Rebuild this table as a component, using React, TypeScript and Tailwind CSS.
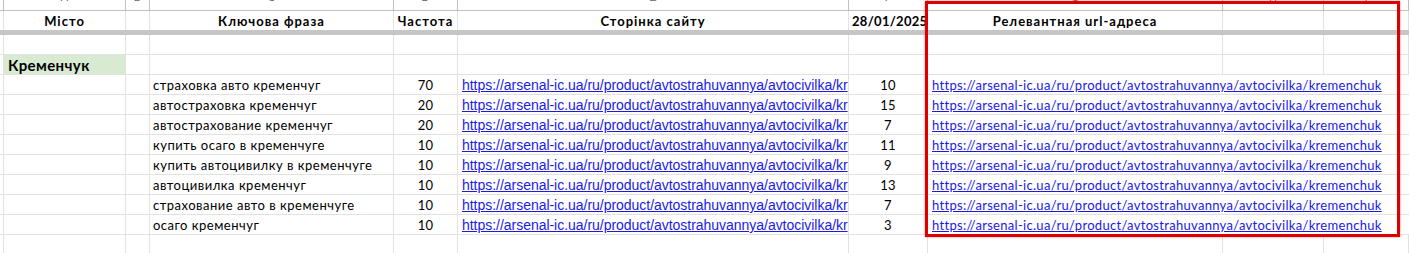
import React from "react";

const W = [4, 122, 24, 244, 64, 391, 79, 295, 101, 85];
const letters = ["", "A", "B", "C", "D", "E", "F", "G", "H", "I"];

const rows = [
  ["страховка авто кременчуг", "70", "10"],
  ["автостраховка кременчуг", "20", "15"],
  ["автострахование кременчуг", "20", "7"],
  ["купить осаго в кременчуге", "10", "11"],
  ["купить автоцивилку в кременчуге", "10", "9"],
  ["автоцивилка кременчуг", "10", "13"],
  ["страхование авто в кременчуге", "10", "7"],
  ["осаго кременчуг", "10", "3"],
];

const URL = "https://arsenal-ic.ua/ru/product/avtostrahuvannya/avtocivilka/kremenchuk";
const URL_CUT = "https://arsenal-ic.ua/ru/product/avtostrahuvannya/avtocivilka/kr";
const nun = "font-['Lato','Noto_Sans',sans-serif]";
const ari = "font-['Liberation_Sans',Arial,sans-serif]";

function Cell({ w, children, className = "" }: { w: number; children?: React.ReactNode; className?: string }) {
  return (
    <div
      className={`shrink-0 h-full border-r border-[#e2e2e2] overflow-hidden flex ${className}`}
      style={{ width: w }}
    >
      {children}
    </div>
  );
}

function EmptyRow() {
  return (
    <div className="flex h-[20px] border-b border-[#e2e2e2]">
      <Cell w={W[0]} className="border-[#c0c0c0]" />
      {W.slice(1).map((w, i) => (
        <Cell key={i} w={w} />
      ))}
    </div>
  );
}

export default function App() {
  return (
    <div className={`relative w-[1409px] h-[253px] bg-white overflow-hidden text-[#000] ${nun}`}>
      {/* column letters row */}
      <div className="flex h-[11px] border-b border-[#c0c0c0]">
        {W.map((w, i) => (
          <div
            key={i}
            className="shrink-0 h-full border-r border-[#c0c0c0] overflow-hidden flex justify-center"
            style={{ width: w }}
          >
            <span className={`text-[11px] leading-[11px] mt-[-8px] text-[#666] ${ari}`}>{letters[i]}</span>
          </div>
        ))}
      </div>
      {/* header row */}
      <div className="flex h-[19px] text-[13px] leading-[17px] font-bold tracking-[1px]">
        <Cell w={W[0]} className="border-[#c0c0c0]" />
        <Cell w={W[1]} className="items-end justify-center">Місто</Cell>
        <Cell w={W[2]} />
        <Cell w={W[3]} className="items-end justify-center">Ключова фраза</Cell>
        <Cell w={W[4]} className="items-end justify-center">Частота</Cell>
        <Cell w={W[5]} className="items-end justify-center">Сторінка сайту</Cell>
        <Cell w={W[6]} className="items-end pl-[3px] overflow-visible tracking-[0.3px]">28/01/2025</Cell>
        <Cell w={W[7]} className="items-end justify-center">Релевантная url-адреса</Cell>
        <Cell w={W[8]} />
        <Cell w={W[9]} />
      </div>
      <div className="h-[5px] bg-[#c6c6c6]" />
      <EmptyRow />
      {/* city row */}
      <div className="flex h-[20px] border-b border-[#e2e2e2]">
        <Cell w={W[0]} className="border-[#c0c0c0]" />
        <Cell w={W[1]} className="bg-[#d9ead3] items-end pl-[4px] text-[15px] leading-[18px] font-bold tracking-[0.4px]">
          Кременчук
        </Cell>
        {W.slice(2).map((w, i) => (
          <Cell key={i} w={w} />
        ))}
      </div>
      {rows.map((r, i) => (
        <div key={i} className="flex h-[20px] border-b border-[#e2e2e2] text-[13px] leading-[17px]">
          <Cell w={W[0]} className="border-[#c0c0c0]" />
          <Cell w={W[1]} />
          <Cell w={W[2]} />
          <Cell w={W[3]} className="items-end pl-[3px] whitespace-nowrap tracking-[0.5px]">{r[0]}</Cell>
          <Cell w={W[4]} className="items-end justify-center tracking-[0.3px]">{r[1]}</Cell>
          <Cell w={W[5]} className={`items-end pl-[4px] text-[14px] tracking-[-0.03px] ${ari}`}>
            <span className="block w-full overflow-hidden whitespace-nowrap underline text-[#1a1ae6]">{URL_CUT}</span>
          </Cell>
          <Cell w={W[6]} className="items-end justify-center tracking-[0.3px]">{r[2]}</Cell>
          <div className="flex-1 h-full flex items-end pl-[4px] whitespace-nowrap tracking-[0.3px]">
            <span className="underline text-[#1a1ae6]">{URL}</span>
          </div>
        </div>
      ))}
      <EmptyRow />
      {/* highlight box */}
      <div className="absolute left-[925px] top-[1px] w-[475px] h-[236px] border-[3px] border-[#dd0000] shadow-[0_0_2px_rgba(255,0,0,0.5)]" />
    </div>
  );
}
